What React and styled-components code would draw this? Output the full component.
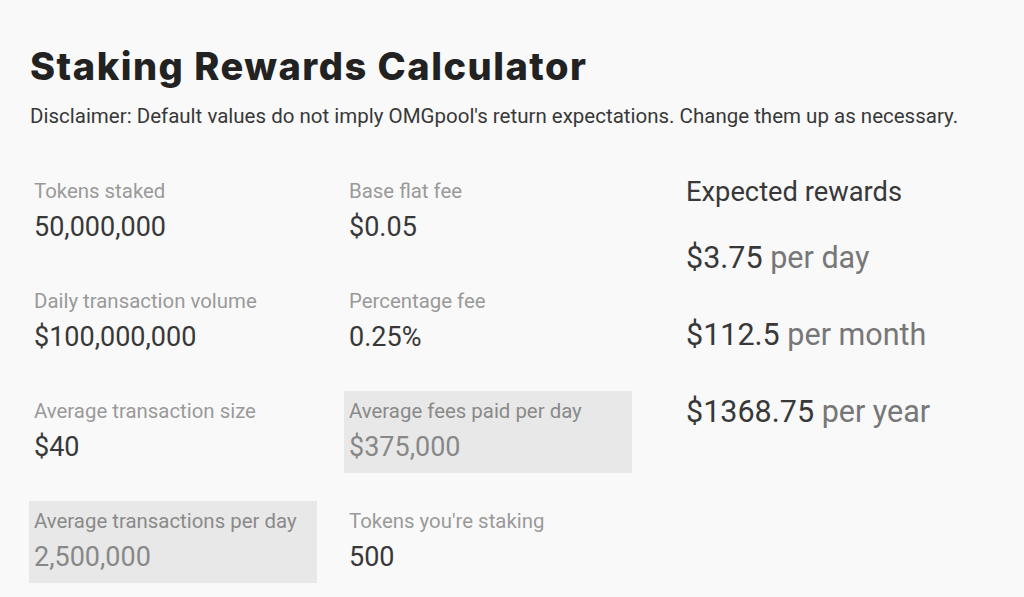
import React from "react";
import styled, { createGlobalStyle } from "styled-components";

const Global = createGlobalStyle`
  html, body { margin: 0; padding: 0; background: #f9f9f9; }
  body { font-family: Roboto, "Noto Sans", sans-serif; color: #333; }
`;

const Page = styled.div`
  padding: 42px 0 0 29px;
  width: 1024px;
  height: 597px;
  box-sizing: border-box;
  overflow: hidden;
`;

const Title = styled.h1`
  margin: 0 0 0 1px;
  font-family: Inter, "Noto Sans", sans-serif;
  font-weight: 800;
  font-size: 38px;
  line-height: 48px;
  color: #222;
  letter-spacing: 1.5px;
`;

const Disclaimer = styled.p`
  margin: 14px 0 0 1px;
  font-size: 20.5px;
  line-height: 24px;
  color: #383838;
  white-space: nowrap;
`;

const Body = styled.div`
  display: flex;
  margin-top: 43px;
`;

const Grid = styled.div`
  display: grid;
  grid-template-columns: 288px 288px;
  grid-auto-rows: 82px;
  column-gap: 27px;
  row-gap: 28px;
`;

const Cell = styled.div`
  padding: 8px 5px 0;
  background: ${(p) => (p.$computed ? "#e8e8e8" : "transparent")};
  white-space: nowrap;
`;

const Label = styled.div`
  font-size: 20.4px;
  line-height: 24px;
  color: ${(p) => (p.$computed ? "#8a8a8a" : "#9a9a9a")};
`;

const Value = styled.div`
  margin-top: 8px;
  font-size: 27px;
  line-height: 32px;
  color: ${(p) => (p.$computed ? "#888" : "#383838")};
`;

const Rewards = styled.div`
  margin-left: 54px;
  padding-top: 5px;
  white-space: nowrap;
`;

const RewardsTitle = styled.div`
  font-size: 27.3px;
  line-height: 32px;
  color: #383838;
  margin-bottom: 32px;
`;

const RewardRow = styled.div`
  font-size: 30.5px;
  line-height: 36px;
  color: #383838;
  margin-bottom: 41px;
`;

const Period = styled.span`
  color: #777;
`;

const cells = [
  { label: "Tokens staked", value: "50,000,000" },
  { label: "Base flat fee", value: "$0.05" },
  { label: "Daily transaction volume", value: "$100,000,000" },
  { label: "Percentage fee", value: "0.25%" },
  { label: "Average transaction size", value: "$40" },
  { label: "Average fees paid per day", value: "$375,000", computed: true },
  { label: "Average transactions per day", value: "2,500,000", computed: true },
  { label: "Tokens you're staking", value: "500" },
];

const rewards = [
  { amount: "$3.75", period: "per day" },
  { amount: "$112.5", period: "per month" },
  { amount: "$1368.75", period: "per year" },
];

export default function App() {
  return (
    <>
      <Global />
      <Page>
        <Title>Staking Rewards Calculator</Title>
        <Disclaimer>
          Disclaimer: Default values do not imply OMGpool's return expectations. Change them up as necessary.
        </Disclaimer>
        <Body>
          <Grid>
            {cells.map((c) => (
              <Cell key={c.label} $computed={c.computed}>
                <Label $computed={c.computed}>{c.label}</Label>
                <Value $computed={c.computed}>{c.value}</Value>
              </Cell>
            ))}
          </Grid>
          <Rewards>
            <RewardsTitle>Expected rewards</RewardsTitle>
            {rewards.map((r) => (
              <RewardRow key={r.period}>
                {r.amount} <Period>{r.period}</Period>
              </RewardRow>
            ))}
          </Rewards>
        </Body>
      </Page>
    </>
  );
}
